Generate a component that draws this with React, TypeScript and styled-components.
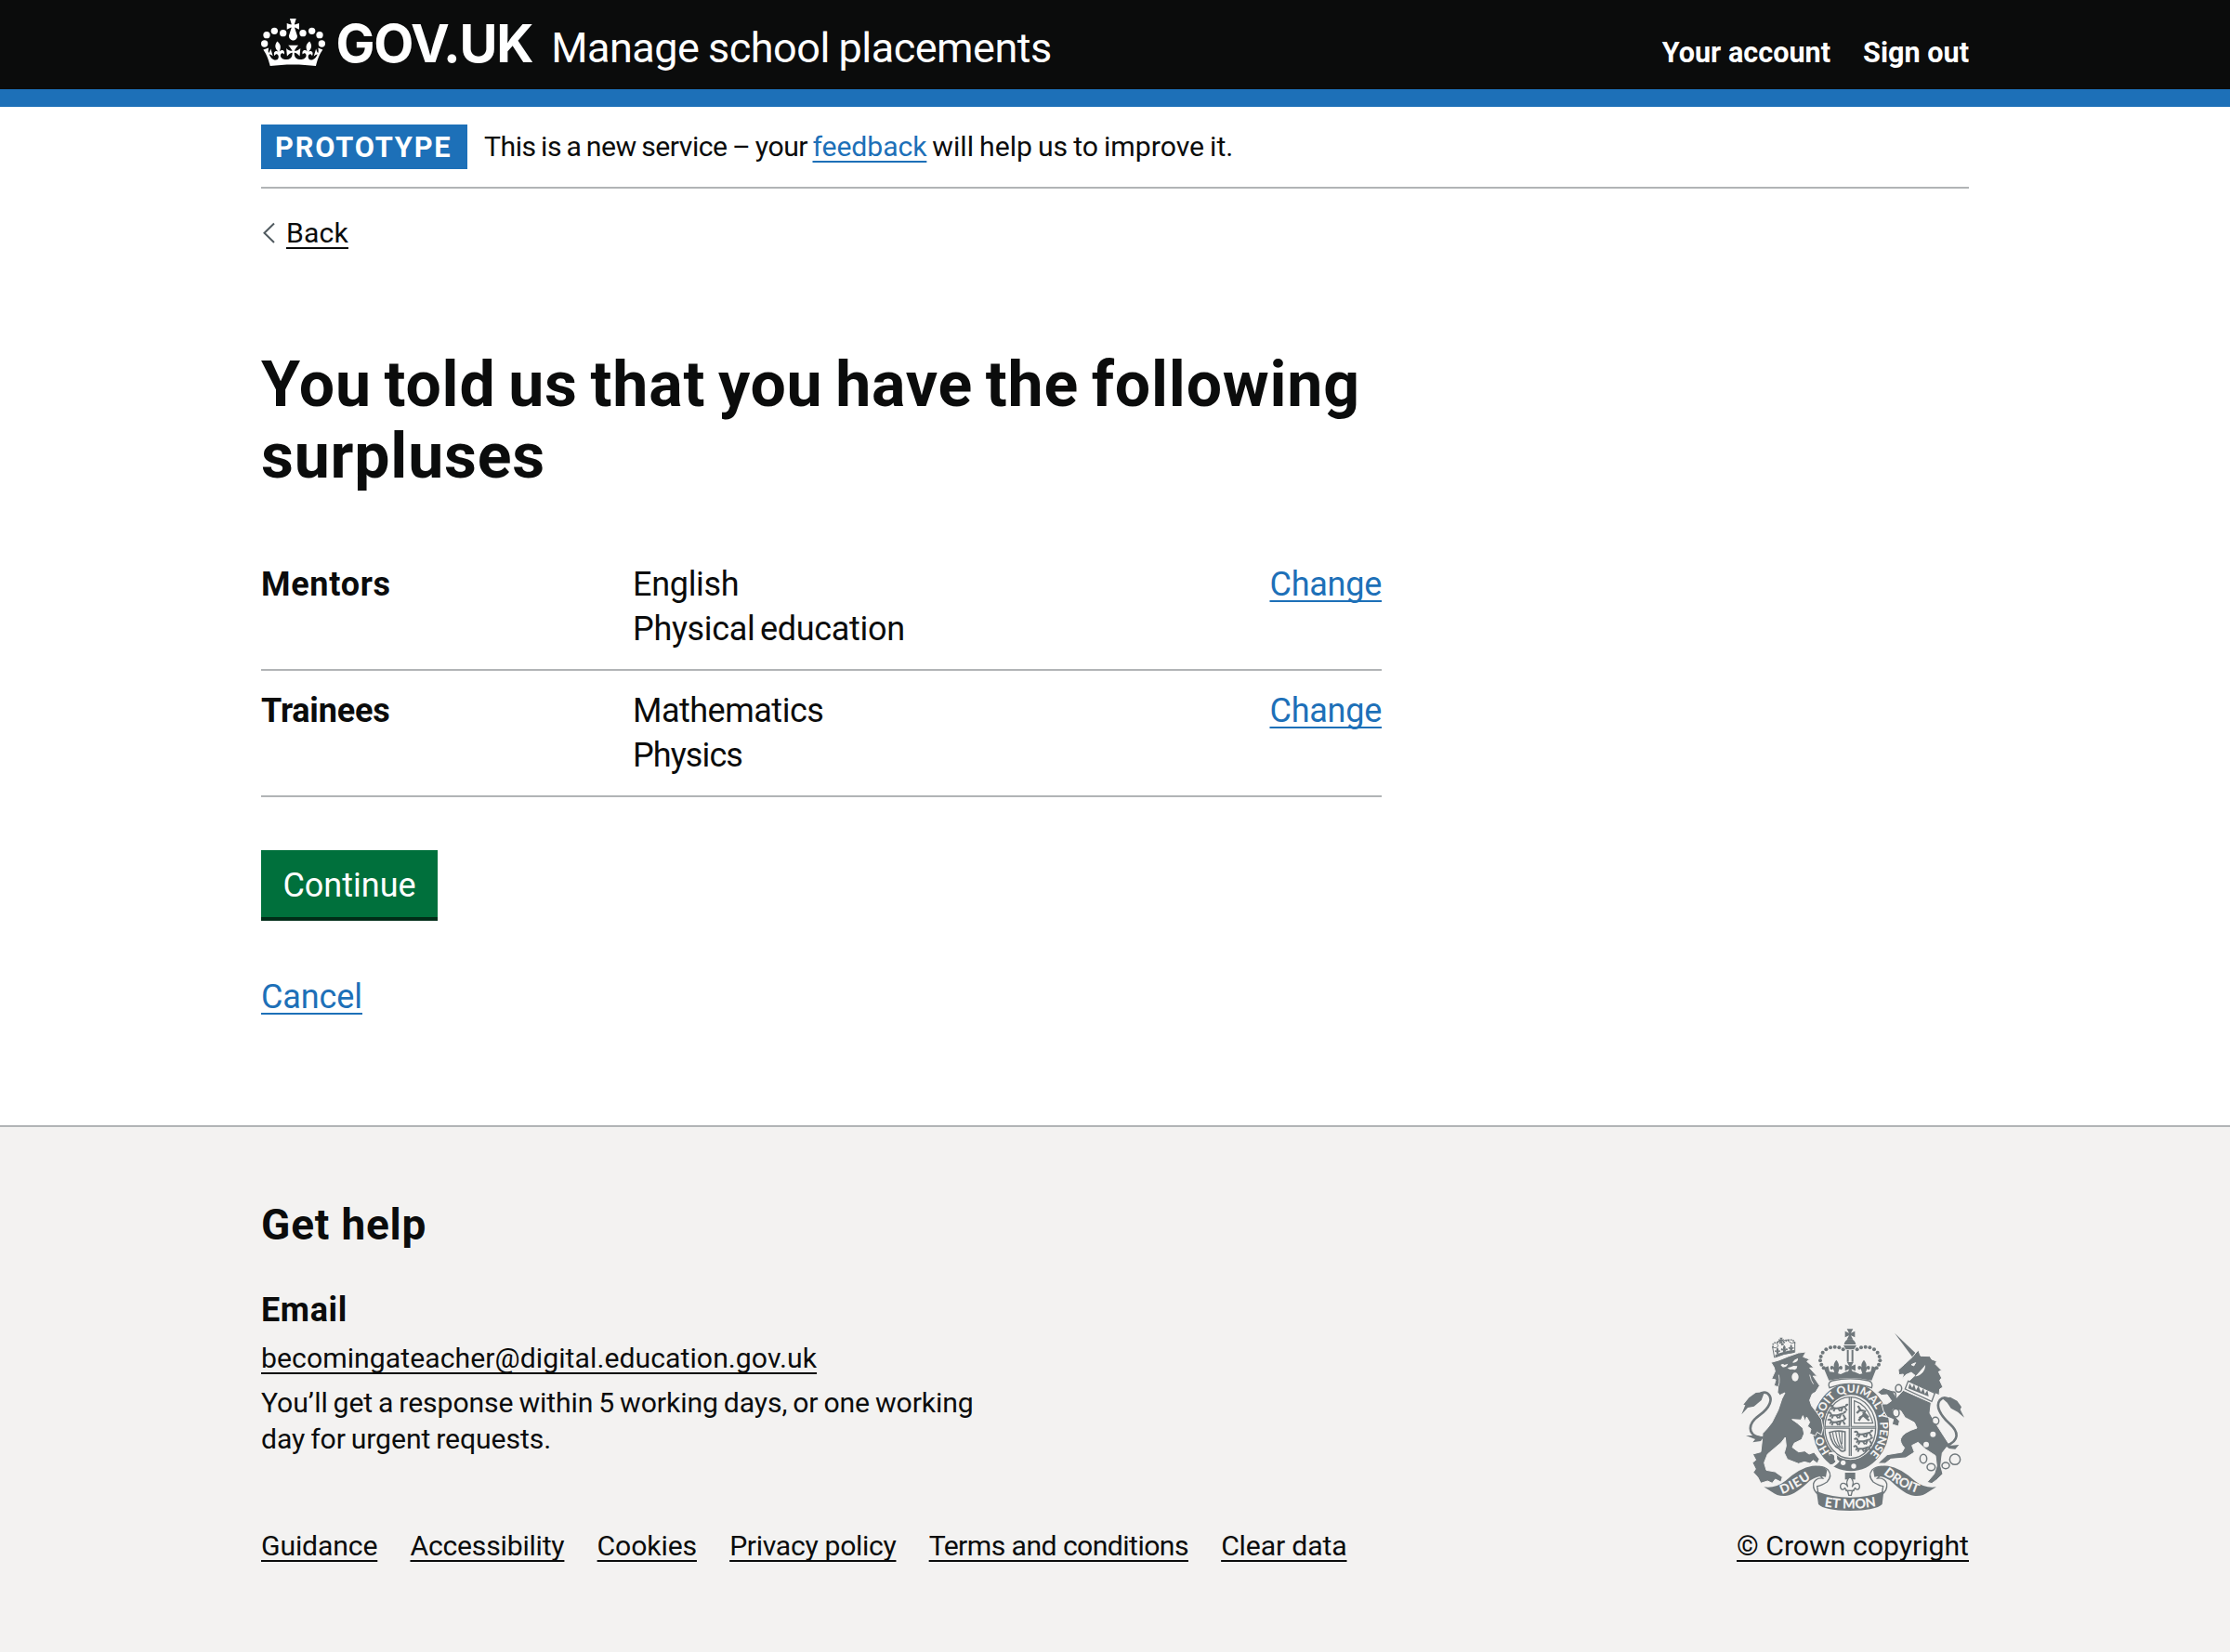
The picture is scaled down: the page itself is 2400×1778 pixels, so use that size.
import type { ReactNode } from 'react';
import styled, { createGlobalStyle } from 'styled-components';

const ink = '#0b0c0c';
const blue = '#1d70b8';
const rule = '#b1b4b6';
const footerBg = '#f3f2f1';
const crestGrey = '#6f777b';

const GlobalStyle = createGlobalStyle`
  body {
    margin: 0;
    background: ${footerBg};
    color: ${ink};
    font-family: Roboto, "Liberation Sans", sans-serif;
  }
  h1, h2, h3, p, dl, dd, dt, ul { margin: 0; padding: 0; }
`;

/* Inline run of text with its own tracking */
const Tracked = styled.span<{ $ls?: number; $ws?: number }>`
  letter-spacing: ${p => p.$ls ?? 0}px;
  word-spacing: ${p => p.$ws ?? 0}px;
`;

const Link = styled.a<{ $ls?: number; $color?: string }>`
  color: ${p => p.$color ?? blue};
  letter-spacing: ${p => p.$ls ?? 0}px;
  text-decoration: underline;
  text-decoration-thickness: 2px;
  text-underline-offset: 5px;
  text-decoration-skip-ink: none;
  white-space: nowrap;
`;

const Container = styled.div`
  width: 1838px;
  margin: 0 auto;
`;

/* Header */
const Header = styled.header`
  box-sizing: border-box;
  height: 115px;
  background: ${ink};
  border-bottom: 19px solid ${blue};
  color: #fff;
`;
const HeaderRow = styled(Container)`
  display: flex;
  justify-content: space-between;
  align-items: baseline;
  padding-top: 17px;
`;
const Brand = styled.div`
  display: flex;
  align-items: baseline;
`;
const CrownIcon = styled.svg`
  align-self: flex-start;
  width: 69px;
  height: 51px;
  margin-top: 3px;
  fill: #fff;
`;
const Wordmark = styled.span`
  margin-left: 11.6px;
  font-family: Inter, "Liberation Sans", sans-serif;
  font-size: 56px;
  font-weight: 700;
  line-height: 60px;
  letter-spacing: -1.3px;
`;
const ServiceName = styled.span`
  margin-left: 20px;
  font-size: 45px;
  line-height: 50px;
  letter-spacing: -0.5px;
  word-spacing: -1px;
`;
const HeaderNav = styled.nav`
  display: flex;
  gap: 35px;
  font-size: 30.6px;
  font-weight: 700;
  line-height: 38px;
`;

/* Page body */
const Page = styled.div`
  background: #fff;
  padding-bottom: 114px;
`;
const PhaseBanner = styled.div`
  display: flex;
  gap: 18px;
  padding: 19px 0;
  border-bottom: 2px solid ${rule};
  font-size: 30.2px;
  line-height: 48px;
`;
const PhaseTag = styled.strong`
  box-sizing: border-box;
  width: 222px;
  height: 48px;
  padding: 1px 0 0 15px;
  background: ${blue};
  color: #fff;
  font-size: 30.8px;
  letter-spacing: 1.8px;
`;
const PhaseText = styled.p`
  white-space: pre;
`;
const BackRow = styled.div`
  display: flex;
  margin-top: 29px;
  font-size: 30.2px;
  line-height: 38px;
`;
const Chevron = styled.svg`
  width: 27px;
  height: 38px;
  fill: none;
  stroke: #505a5f;
  stroke-width: 2;
`;
const Column = styled.main`
  width: 1206px;
`;
const Title = styled.h1`
  margin-top: 106px;
  font-size: 68px;
  font-weight: 700;
  line-height: 76.6px;
  letter-spacing: 0.8px;
  word-spacing: -4px;
`;
const SummaryList = styled.dl`
  margin-top: 56.8px;
  font-size: 36px;
  line-height: 48px;
`;
const SummaryRow = styled.div`
  display: grid;
  grid-template-columns: 400px 1fr auto;
  padding: 19px 0;
  border-bottom: 2px solid ${rule};
`;
const SummaryKey = styled.dt<{ $ls: number }>`
  font-weight: 700;
  letter-spacing: ${p => p.$ls}px;
`;
const SummaryValue = styled.dd`
  display: flex;
  flex-direction: column;
`;
const SummaryAction = styled.dd``;
const ContinueButton = styled.button`
  display: block;
  box-sizing: border-box;
  width: 190px;
  height: 76px;
  margin: 57px 0 0;
  padding: 4px 0 0;
  border: 0;
  border-bottom: 4px solid #002d18;
  background: #00703c;
  color: #fff;
  font: 400 36px/68px Roboto, "Liberation Sans", sans-serif;
  text-align: center;
`;
const CancelLine = styled.p`
  margin-top: 58px;
  font-size: 36px;
  line-height: 48px;
`;

/* Footer */
const Footer = styled.footer`
  border-top: 2px solid ${rule};
  padding: 77px 0 95px;
  background: ${footerBg};
`;
const FooterRow = styled(Container)`
  display: flex;
  justify-content: space-between;
  align-items: flex-end;
  font-size: 30.2px;
  line-height: 38.3px;
`;
const FooterHeading = styled.h2`
  font-size: 46px;
  line-height: 56px;
  letter-spacing: 0.8px;
`;
const FooterSubheading = styled.h3`
  margin-top: 40px;
  font-size: 36px;
  line-height: 48px;
  letter-spacing: 0.6px;
`;
const FooterText = styled.p<{ $width?: number }>`
  margin-top: 9.5px;
  width: ${p => (p.$width ? `${p.$width}px` : 'auto')};
`;
const FooterLinks = styled.ul`
  display: flex;
  gap: 35.2px;
  margin-top: 76.8px;
  list-style: none;
`;
const Copyright = styled.div`
  display: flex;
  flex-direction: column;
  align-items: flex-end;
  gap: 16px;
`;
const Crest = styled.svg`
  width: 250px;
  height: 201px;
  fill: ${crestGrey};
`;

function Crown() {
  const beads = [[74, 141], [81, 113], [106, 100], [134, 107], [198, 107], [227, 100], [252, 113], [259, 141]];
  return (
    <CrownIcon viewBox="63 60 207 153" aria-hidden="true">
      {beads.map(([x, y]) => <circle key={x} cx={x} cy={y} r="11" />)}
      <path transform="translate(70 60) scale(6)" d="M17 4.7l2.3 1.2V2.5l-2.3.7-.2-.2.9-3h-3.4l.9 3-.2.2c-.1.1-2.3-.7-2.3-.7v3.4L15 4.7c.1.1.1.2.2.2l-1.3 4c-.1.2-.1.4-.1.6 0 1.1.8 2 1.9 2.2h.7c1-.2 1.9-1.1 1.9-2.1 0-.2 0-.4-.1-.6l-1.3-4c-.1-.2 0-.2.1-.3" />
      <path transform="translate(70 33) scale(6)" d="M16 29.2c4.4 0 8.6.3 12.3.8 1.1-4.5 2.4-7 3.7-8.8l-2.5-.9c.2 1.3.3 1.9 0 2.7-.4-.4-.8-1.1-1.1-2.3l-1.2 4c.7-.5 1.3-.8 2-.9-1.1 2.5-2.6 3.1-3.5 3-1.1-.2-1.7-1.2-1.5-2.1.3-1.2 1.5-1.5 2.1-.1 1.1-2.3-.8-3-2-2.3 1.9-1.9 2.1-3.5.6-5.6-2.1 1.6-2.1 3.2-1.2 5.5-1.2-1.4-3.2-.6-2.5 1.6.9-1.4 2.1-.5 1.9.8-.2 1.1-1.7 2.1-3.5 1.9-2.7-.2-2.9-2.1-2.9-3.6.7-.1 1.9.5 2.9 1.9l.4-4.3c-1.1 1.1-2.1 1.4-3.2 1.4.4-1.2 2.1-3 2.1-3h-5.4s1.7 1.9 2.1 3c-1.1 0-2.1-.2-3.2-1.4l.4 4.3c1-1.4 2.2-2 2.9-1.9-.1 1.5-.2 3.4-2.9 3.6-1.9.2-3.4-.8-3.5-1.9-.2-1.3 1-2.2 1.9-.8.7-2.3-1.2-3-2.5-1.6.9-2.2.9-3.9-1.2-5.5-1.5 2-1.3 3.7.6 5.6-1.2-.7-3.1 0-2 2.3.6-1.4 1.8-1.1 2.1.1.2.9-.3 1.9-1.5 2.1-.9.2-2.4-.5-3.5-3 .6 0 1.2.3 2 .9l-1.2-4c-.3 1.1-.7 1.9-1.1 2.3-.3-.8-.2-1.4 0-2.7L0 21.2c1.3 1.8 2.6 4.3 3.7 8.8 3.7-.5 7.9-.8 12.3-.8" />
    </CrownIcon>
  );
}

function Passant({ x, y }: { x: number; y: number }) {
  return (
    <path
      transform={`translate(${x} ${y})`}
      fill="none"
      stroke={crestGrey}
      strokeWidth="6"
      d="M2 4q6-6 10 0t-4 10M10 8q14 4 28 0t16-4M20 10l-5 10M30 10l6 9M44 8l-5 12M52 8l6 10M56 4q-2-8 6-5"
    />
  );
}

function Fleur({ x, y, s = 1 }: { x: number; y: number; s?: number }) {
  return (
    <path
      transform={`translate(${x} ${y}) scale(${s})`}
      d="M0-20C10-8 8-2 4 6C8-4 18-6 18 4C17 10 10 10 10 5C8 10 6 14 5 20H-5C-6 14-8 10-10 5C-10 10-17 10-18 4C-18-6-8-4-4 6C-8-2-10-8 0-20Z"
    />
  );
}

function CrossPattee({ x, y, s = 1 }: { x: number; y: number; s?: number }) {
  return (
    <path
      transform={`translate(${x} ${y}) scale(${s})`}
      d="M-10-17H10L3-4L16-10V10L3 4L10 17H-10L-3 4L-16 10V-10L-3-4Z"
    />
  );
}

function RoyalArms() {
  const arch = [[370, 124], [357, 118], [343, 116], [329, 118], [315, 124], [304, 134], [298, 147], [296, 160], [300, 173], [307, 184]];
  const chain = [[549, 250, 10, 12], [532, 272, 8, 11], [540, 329, 11, 13], [668, 355, 11, 12], [629, 477, 11, 14], [654, 504, 13, 11], [701, 499, 12, 10], [731, 479, 17, 17]];
  const bg = footerBg;
  const motto: [string, number][] = [['HO', 78], ['SOIT', 192], ['QUI', 283], ['MAL', 351], ['Y', 440], ['PENSE', 471]];
  return (
    <Crest viewBox="26 51 750 603" role="img" aria-label="Royal coat of arms">
      {/* Garter and shield */}
      <ellipse cx="395" cy="375" rx="105" ry="123" fill={bg} stroke={crestGrey} strokeWidth="37" />
      <ellipse cx="393" cy="377" rx="83" ry="101" fill={bg} stroke={bg} strokeWidth="6" />
      <ellipse cx="393" cy="377" rx="82" ry="99" fill="none" stroke={crestGrey} strokeWidth="4" />
      <path id="garter" d="M395 488A94 112 0 0 1 395 263A94 112 0 0 1 395 488" fill="none" />
      <g fill={bg} fontFamily="Lato, sans-serif" fontWeight="900" fontSize="36">
        {motto.map(([word, at]) => (
          <text key={word}><textPath href="#garter" startOffset={at}>{word}</textPath></text>
        ))}
      </g>
      <path d="M388 278h10v190h-10zM310 371h166v9h-166z" />
      <path d="M393 278v190M312 375.500h162" stroke={bg} strokeWidth="2" />
      <Passant x={324} y={304} />
      <Passant x={318} y={327} />
      <Passant x={318} y={349} />
      <Passant x={404} y={388} />
      <Passant x={404} y={411} />
      <Passant x={402} y={435} />
      <g fill="none" stroke={crestGrey} strokeWidth="3.500">
        <path d="M406 290Q450 304 466 362H406Z" />
        <path strokeWidth="7" d="M418 306l8 14 14 4-6 14-12 8M434 326l18 18M436 338l18 16M424 320l-10 10M428 342l-8 12" />
        <path strokeWidth="5" d="M326 392Q350 384 376 390V450Q366 458 356 444Q334 436 326 392Z" />
        <path d="M336 392Q340 428 358 440M346 390Q350 424 364 444M356 390Q358 420 369 446M366 390v40" />
      </g>
      {/* Buckle and pendant strap */}
      <path d="M324 462Q346 454 346 474Q344 480 352 486Q340 500 326 500" fill="none" stroke={bg} strokeWidth="9" />
      <path d="M326 464Q340 460 339 474Q336 482 344 486Q338 494 328 494" fill="none" stroke={crestGrey} strokeWidth="3" />
      <circle cx="370" cy="490" r="8" fill={bg} />
      <circle cx="404" cy="501" r="8" fill={bg} />
      <path d="M376 522h33v22h-33z" />
      <g fill={bg} stroke={crestGrey} strokeWidth="4">
        <path d="M392 534C406 548 404 558 399 568C406 552 424 552 423 568C421 580 408 578 409 570C406 578 402 580 399 582L396 595H388L385 582C382 580 378 578 375 570C376 578 363 580 361 568C360 552 378 552 385 568C380 558 378 548 392 534Z" />
        <path d="M378 580h28" />
      </g>

      {/* Crown above the garter */}
      <CrossPattee x={392} y={75} />
      <path d="M373 108Q376 91 392 91Q408 91 411 108ZM371 111H413L405 124H379Z" />
      {arch.map(([x, y]) => (
        <g key={`${x}-${y}`}>
          <circle cx={x} cy={y} r="6" />
          <circle cx={785 - x} cy={y} r="6" />
        </g>
      ))}
      <path d="M382 126h6v38h-6zM397 126h6v38h-6z" />
      <CrossPattee x={393} y={183} s={1.05} />
      <Fleur x={348} y={180} s={1.1} />
      <Fleur x={437} y={180} s={1.1} />
      <path d="M307 184L322 178L326 196L342 198L362 204L380 196H405L424 204L444 198L459 196L463 178L478 184L462 224Q393 208 324 224Z" />
      <path d="M335 225Q393 212 452 225Q468 230 462 248Q392 222 326 248Q318 230 335 225Z" fill={bg} stroke={crestGrey} strokeWidth="4" />

      {/* Lion supporter */}
      <g stroke={bg} strokeWidth="3" strokeLinejoin="round">
        <path d="M137 166L162 159L192 147L226 135L250 132L241 148L262 156L253 163L276 183L262 184L286 211L273 210L294 241L281 262L270 268L262 288L268 306L285 328L300 350L305 378L300 400L286 391L280 403L262 396L266 381L255 372L262 359L252 342L247 356L240 338L234 352L205 350L222 362L240 378L244 396L236 415L212 427L206 440L226 455L246 452L260 462L276 456L293 478L287 492L273 482L263 492L245 487L226 493L190 479L180 458L186 436L183 408Q172 426 152 440L126 462L115 490L122 514L150 519L174 536L169 552L151 543L141 556L126 549L104 556L94 536L80 521L87 510L77 490L88 481L78 462L104 455L108 420L110 395Q122 384 140 360L160 320L172 284L182 264L165 272L158 262L160 245L147 241L152 222L139 219L150 195L147 182Z" />
      </g>
      <path d="M168 174q8-6 12 0l12-4q-6 14-18 11zM206 166q6-10 18-14q2 12-14 15zM190 184q12-3 20-7l12 1q0 8-8 12l-10-2q-6 3-14-4z" fill={bg} />
      <ellipse cx="215" cy="213" rx="11" ry="14" fill={bg} />
      <path d="M162 206q6 30-6 44M262 206q4 20 12 30" stroke={bg} strokeWidth="2.500" fill="none" />
      <g fill="none" stroke={crestGrey}>
        <path strokeWidth="8" d="M100 408C58 398 64 362 98 338C134 312 146 282 126 266Q112 258 98 270" />
        <path strokeWidth="3" d="M148 150L142 116Q156 124 160 112Q152 100 160 98Q170 96 172 104M214 133L214 100Q204 108 196 100Q192 90 182 94Q176 96 176 104M148 150Q180 136 214 133" />
        <path strokeWidth="5" strokeDasharray="5 3" d="M144 118Q140 104 152 102Q168 98 174 112Q180 96 192 94Q210 90 214 104" />
      </g>
      <path d="M150 142Q180 128 212 126V134Q180 138 152 150Z" />
      <CrossPattee x={170} y={95} s={0.5} />
      <Fleur x={180} y={122} s={0.6} />
      <Fleur x={158} y={128} s={0.5} />
      <Fleur x={202} y={118} s={0.5} />
      <path d="M42 334L54 304L48 302L66 280L88 264L116 262L106 288L82 308L62 312ZM56 402L84 402L114 406L104 420L78 424L86 414Z" />

      {/* Unicorn supporter */}
      <path d="M536 71L606 138L594 149Z" />
      <g stroke={bg} strokeWidth="3" strokeLinejoin="round">
        <path d="M594 148L602 138L613 126L620 145L650 146L656 156L672 162L668 172L688 192L678 196L688 216L682 224L692 246L682 252L680 272L662 264L578 230L602 208L590 198L572 206L562 218L564 204L550 206L548 190L568 172Z" />
        <path d="M564 256L654 296L650 330L662 352L690 396L712 430L690 458L685 500L692 526L672 545L656 557L641 553L664 526L672 500L668 467L636 446L612 424L592 434L600 456L572 474L524 478L506 492L482 492L512 464L560 456L568 442Q552 424 556 412Q562 392 608 378L600 360L570 344L556 322L530 318L538 340L552 356L548 372L528 366L532 350L512 342L500 322L494 300L512 300L526 290L512 270L494 272L481 262L500 248L530 258L542 280Z" />
      </g>
      <path d="M580 226L666 265L656 292L570 252Z" fill={bg} stroke={crestGrey} strokeWidth="4" />
      <path d="M580 250l5-16 8 14 6-12 6 20 8-14 8 20 8-12 5 18 8-12 4 20z" />
      <path d="M590 173l14-6-6 10zM604 210Q632 204 634 176" fill={bg} stroke={bg} strokeWidth="3" />
      <g fill="none" stroke={crestGrey}>
        <path strokeWidth="8" d="M704 434C744 420 744 392 716 366C682 336 668 306 682 288Q696 272 716 288" />
      </g>
      <path d="M690 282L716 278L738 290L752 310L748 318L761 344L740 326L718 314L706 296ZM690 426L720 434L744 432L732 446L712 444Z" />
      <g fill="none" stroke={crestGrey} strokeWidth="4.500">
        {chain.map(([x, y, rx, ry]) => <ellipse key={x} cx={x} cy={y} rx={rx} ry={ry} />)}
      </g>
      <g fill={bg}>
        <circle cx="668" cy="355" r="8" />
        <circle cx="660" cy="398" r="9" />
        <circle cx="638" cy="431" r="9" />
        <circle cx="540" cy="329" r="8" />
      </g>

      {/* Motto ribbon */}
      <g fill={bg} stroke={crestGrey} strokeWidth="4">
        <path d="M272 508Q300 494 322 514Q336 532 318 552Q300 564 286 566L290 592Q272 580 274 558Q280 538 304 540Z" />
        <path d="M513 508Q485 494 463 514Q449 532 467 552Q485 564 499 566L495 592Q513 580 511 558Q505 538 481 540Z" />
      </g>
      <path d="M114 568Q150 574 184 548Q230 506 270 500Q304 496 318 514L314 536Q292 528 262 548Q216 592 188 596Q160 600 140 584Z" />
      <path d="M671 568Q635 574 601 548Q555 506 515 500Q481 496 467 514L471 536Q493 528 523 548Q569 592 597 596Q625 600 645 584Z" />
      <path d="M284 582Q334 602 392 602Q450 602 501 582L496 624Q476 644 392 645Q308 644 290 624Z" />
      <path id="dieu" d="M168 592Q214 580 290 524" fill="none" />
      <path id="etmon" d="M306 630Q392 646 480 630" fill="none" />
      <path id="droit" d="M498 524Q556 574 622 592" fill="none" />
      <g fill={bg} fontFamily="Lato, sans-serif" fontWeight="900" fontSize="41">
        <text letterSpacing="3"><textPath href="#dieu" startOffset="4">DIEU</textPath></text>
        <text fontSize="43"><textPath href="#etmon" startOffset="3">ET MON</textPath></text>
        <text><textPath href="#droit" startOffset="2">DROIT</textPath></text>
      </g>
    </Crest>
  );
}

type SummaryItem = { label: string; tracking: number; values: [string, number, number][] };

const summary: SummaryItem[] = [
  { label: 'Mentors', tracking: 0.7, values: [['English', -0.3, 0], ['Physical education', -0.33, -3]] },
  { label: 'Trainees', tracking: -0.2, values: [['Mathematics', -0.5, 0], ['Physics', -0.9, 0]] },
];

const footerLinks: [string, number][] = [
  ['Guidance', -0.15],
  ['Accessibility', -0.23],
  ['Cookies', -0.14],
  ['Privacy policy', -0.33],
  ['Terms and conditions', -0.57],
  ['Clear data', -0.15],
];

function SummaryEntry({ item, children }: { item: SummaryItem; children: ReactNode }) {
  return (
    <SummaryRow>
      <SummaryKey $ls={item.tracking}>{item.label}</SummaryKey>
      <SummaryValue>
        {item.values.map(([text, ls, ws]) => <Tracked key={text} $ls={ls} $ws={ws}>{text}</Tracked>)}
      </SummaryValue>
      <SummaryAction>{children}</SummaryAction>
    </SummaryRow>
  );
}

export default function App() {
  return (
    <>
      <GlobalStyle />
      <Header>
        <HeaderRow>
          <Brand>
            <Crown />
            <Wordmark>GOV.UK</Wordmark>
            <ServiceName>Manage school placements</ServiceName>
          </Brand>
          <HeaderNav>
            <span>Your account</span>
            <span>Sign out</span>
          </HeaderNav>
        </HeaderRow>
      </Header>
      <Page>
        <Container>
          <PhaseBanner>
            <PhaseTag>PROTOTYPE</PhaseTag>
            <PhaseText>
              <Tracked $ls={-0.5} $ws={-1.5}>{'This is a new service – your '}</Tracked>
              <Link $ls={-0.1}>feedback</Link>
              <Tracked $ws={-1.5}>{' will help us to improve it.'}</Tracked>
            </PhaseText>
          </PhaseBanner>
          <BackRow>
            <Chevron viewBox="0 0 27 38" aria-hidden="true"><path d="M14 8.500L3.500 18.700L14 29" /></Chevron>
            <Link $color={ink} $ls={0.15}>Back</Link>
          </BackRow>
          <Column>
            <Title>You told us that you have the following surpluses</Title>
            <SummaryList>
              {summary.map(item => (
                <SummaryEntry key={item.label} item={item}><Link $ls={-0.25}>Change</Link></SummaryEntry>
              ))}
            </SummaryList>
            <ContinueButton>Continue</ContinueButton>
            <CancelLine><Link $ls={-0.1}>Cancel</Link></CancelLine>
          </Column>
        </Container>
      </Page>
      <Footer>
        <FooterRow>
          <div>
            <FooterHeading>Get help</FooterHeading>
            <FooterSubheading>Email</FooterSubheading>
            <FooterText>
              <Link $color={ink} $ls={0.05}>becomingateacher@digital.education.gov.uk</Link>
            </FooterText>
            <FooterText $width={790}>
              <Tracked $ls={-0.09} $ws={-1.5}>
                You’ll get a response within 5 working days, or one working day for urgent requests.
              </Tracked>
            </FooterText>
            <FooterLinks>
              {footerLinks.map(([label, ls]) => <li key={label}><Link $color={ink} $ls={ls}>{label}</Link></li>)}
            </FooterLinks>
          </div>
          <Copyright>
            <RoyalArms />
            <Link $color={ink}>© Crown copyright</Link>
          </Copyright>
        </FooterRow>
      </Footer>
    </>
  );
}
